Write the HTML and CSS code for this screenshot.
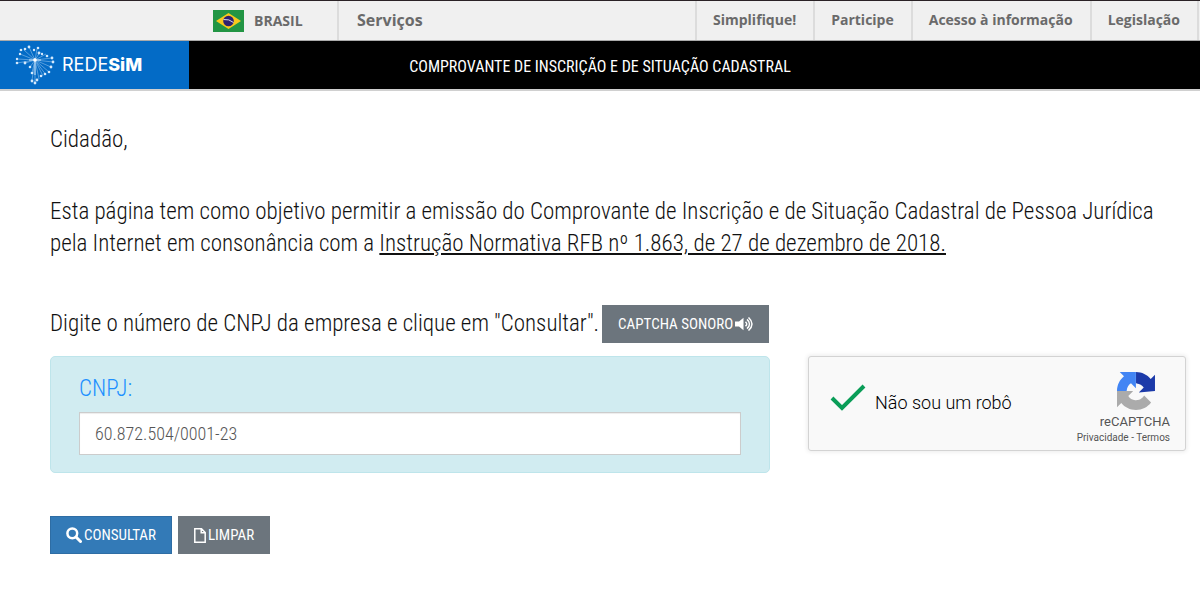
FILE: index.html
```html
<!DOCTYPE html>
<html lang="pt-BR">
<head>
<meta charset="utf-8">
<meta name="viewport" content="width=device-width, initial-scale=1">
<title>Comprovante de Inscrição e de Situação Cadastral</title>
<link rel="stylesheet" href="styles.css">
</head>
<body>
<nav class="gov-bar">
  <a class="gov-brand" href="#">
    <svg class="flag" viewBox="0 0 31 22" aria-hidden="true">
      <rect width="31" height="22" fill="#229544"/>
      <path d="M3 11 15.500 3 28 11 15.500 19Z" fill="#f8c81c"/>
      <circle cx="15.500" cy="11" r="5.300" fill="#302070"/>
      <path d="M10.500 9.500Q16 8.800 20.500 12.500" fill="none" stroke="#d8d8e8" stroke-width="1"/>
    </svg>
    <span>BRASIL</span>
  </a>
  <a class="gov-services" href="#">Serviços</a>
  <div class="gov-links">
    <a href="#">Simplifique!</a>
    <a href="#">Participe</a>
    <a href="#">Acesso à informação</a>
    <a href="#">Legislação</a>
  </div>
</nav>
<header class="site-header">
  <a class="logo" href="#">
    <svg class="logo-map" viewBox="0 0 40 40" aria-hidden="true">
      <g stroke="#8fc0ec" stroke-width="1" opacity=".6">
        <path d="M20 15 2 14M20 15 2 18M20 15 5 9M20 15 9 5M20 15 14 2M20 15 22 4M20 15 25 7M20 15 31 9M20 15 37 13M20 15 38 17M20 15 36 22M20 15 34 27M20 15 28 31M20 15 24 34M20 15 20 39M20 15 17 35M20 15 15 22M20 15 10 18M20 15 17 28M20 15 31 30"/>
      </g>
      <path d="M20 13V30M14 15H26" stroke="#cde5fa" stroke-width="1"/>
      <circle cx="20" cy="15" r="1.800" fill="#fff"/>
      <g fill="#d4e9fc">
        <circle cx="2" cy="14" r="1.200"/><circle cx="2" cy="18" r="1.300"/><circle cx="5" cy="9" r="1.200"/><circle cx="6" cy="5" r="1.300"/><circle cx="10" cy="4" r="1.300"/><circle cx="14" cy="2" r="1.400"/><circle cx="19" cy="5" r="1.200"/><circle cx="23" cy="3" r="1.300"/><circle cx="24" cy="8" r="1.400"/><circle cx="27" cy="9" r="1.200"/><circle cx="32" cy="11" r="1.300"/><circle cx="37" cy="13" r="1.400"/><circle cx="38" cy="17" r="1.400"/><circle cx="36" cy="22" r="1.400"/><circle cx="34" cy="27" r="1.300"/><circle cx="30" cy="29" r="1.300"/><circle cx="26" cy="31" r="1.300"/><circle cx="22" cy="35" r="1.400"/><circle cx="20" cy="38" r="1.400"/><circle cx="17" cy="36" r="1.400"/><circle cx="17" cy="28" r="1.300"/><circle cx="15" cy="22" r="1.300"/><circle cx="10" cy="18" r="1.400"/>
      </g>
    </svg>
    <span class="logo-text">REDE<b>SiM</b></span>
  </a>
  <h1>COMPROVANTE DE INSCRIÇÃO E DE SITUAÇÃO CADASTRAL</h1>
</header>
<main class="content">
  <p>Cidadão,</p>
  <p class="intro">Esta página tem como objetivo permitir a emissão do Comprovante de Inscrição e de Situação Cadastral de Pessoa Jurídica pela Internet em consonância com a <a href="#">Instrução Normativa RFB nº 1.863, de 27 de dezembro de 2018.</a></p>
  <form>
    <div class="prompt">
      <p>Digite o número de CNPJ da empresa e clique em "Consultar".</p>
      <button class="btn" type="button">CAPTCHA SONORO
        <svg class="icon-sound" viewBox="0 0 18 14" aria-hidden="true"><path d="M0 4.500H4L8.500 .7V13.300L4 9.500H0Z" fill="#fff"/><path d="M10.500 4.700Q13 7 10.500 9.300M12 2.400Q17 7 12 11.600M13.500 .5Q20.500 7 13.500 13.500" fill="none" stroke="#fff" stroke-width="1.500"/></svg>
      </button>
    </div>
    <div class="fields">
      <div class="panel">
        <label for="cnpj">CNPJ:</label>
        <input id="cnpj" type="text" value="60.872.504/0001-23">
      </div>
      <div class="captcha">
        <svg class="check" viewBox="0 0 36 28" aria-hidden="true"><path d="M2 14 12 24 34 2" fill="none" stroke="#0a9d58" stroke-width="4"/></svg>
        <span class="captcha-label">Não sou um robô</span>
        <div class="captcha-brand">
          <svg class="captcha-logo" viewBox="0 0 64 64" aria-hidden="true">
            <path d="M64 31.955l-.033-1.370V4.687l-7.160 7.160C50.948 4.674 42.033.093 32.050.093V19c.485 0 .860.057 1.135.163 4.976.393 9.288 3.140 11.828 7.124l-8.307 8.307L64 31.953" fill="#1c3aa9"/>
            <path d="M31.862.094l-1.370.033H4.594l7.160 7.160C4.580 13.147 0 22.060 0 32.046H16.260c0-.485.057-.860.163-1.135.393-4.976 3.140-9.288 7.124-11.828l8.307 8.307L31.860.095" fill="#4285f4"/>
            <path d="M.001 32.045l.033 1.370v25.898l7.160-7.160c5.860 7.173 14.774 11.754 24.760 11.754 10.400 0 19.622-4.960 25.458-12.640l-11.736-11.860a15.550 15.550 0 0 1-4.754 5.334c-2.050 1.600-4.952 2.906-8.968 2.906-.485 0-.860-.057-1.135-.163-4.976-.393-9.288-3.140-11.828-7.124l8.307-8.307c-10.522.040-22.400.066-27.295-.005" fill="#ababab"/>
          </svg>
          <span class="captcha-name">reCAPTCHA</span>
          <span class="captcha-links"><a href="#">Privacidade</a> - <a href="#">Termos</a></span>
        </div>
      </div>
    </div>
    <div class="actions">
      <button class="btn btn-primary" type="submit">
        <svg class="icon-search" viewBox="0 0 16 16" aria-hidden="true"><circle cx="6.300" cy="6.300" r="4.900" fill="none" stroke="#fff" stroke-width="2.500"/><path d="M10 10 14.500 14.500" stroke="#fff" stroke-width="3" stroke-linecap="round"/></svg>
        CONSULTAR</button>
      <button class="btn" type="reset">
        <svg class="icon-file" viewBox="0 0 12 15" aria-hidden="true"><path d="M.8 .8H7.500L11.200 4.500V14.200H.8ZM7.200 .8V4.800H11.200" fill="none" stroke="#fff" stroke-width="1.500"/></svg>
        LIMPAR</button>
    </div>
  </form>
</main>
</body>
</html>
```
FILE: styles.css
```css
* { box-sizing: border-box; }
body {
  margin: 0;
  background: #fff;
  color: #111;
  font-family: "Roboto Condensed", Roboto, sans-serif;
  font-size: 23px;
  font-weight: 300;
  line-height: 32px;
}
p, h1 { margin: 0; }
a { color: inherit; }
svg { flex: none; }

.gov-bar {
  display: flex;
  height: 41px;
  border-top: 1px solid #2a2226;
  border-bottom: 1px solid #aaa;
  background: #f0f0f0;
  color: #6a6a6a;
  font: bold 14px/38px "Open Sans", sans-serif;
}
.gov-bar a { text-decoration: none; }
.gov-brand {
  display: flex;
  align-items: center;
  gap: 10px;
  width: 339px;
  padding-left: 213px;
  border-right: 2px solid #dcdcdc;
}
.flag { width: 31px; height: 22px; }
.gov-services { padding-left: 18px; font-size: 16px; }
.gov-links {
  display: flex;
  margin-left: auto;
  padding-right: 1px;
}
.gov-links a { padding: 0 17px 0 16px; border-left: 2px solid #dcdcdc; }
.gov-links a:last-child { border-right: 2px solid #dcdcdc; }

.site-header {
  display: grid;
  grid-template-columns: 189px 1fr 189px;
  height: 50px;
  border-bottom: 2px solid #d0d0d0;
  background: #000;
  color: #fff;
}
.logo {
  display: flex;
  align-items: center;
  gap: 7px;
  padding-left: 15px;
  background: #036bc6;
  text-decoration: none;
}
.logo-map { width: 40px; height: 40px; }
.logo-text { font: 400 18px/24px Inter, sans-serif; }
.logo-text b { font-weight: 800; }
h1 {
  align-self: center;
  padding-top: 3px;
  font-size: 16px;
  font-weight: 400;
  line-height: 24px;
  text-align: center;
}

.content { padding: 33px 14px 32px 50px; }
.intro { margin-top: 40px; padding-right: 30px; }
.prompt {
  display: flex;
  align-items: center;
  gap: 3px;
  margin-top: 45px;
}
.btn {
  display: inline-flex;
  align-items: center;
  justify-content: center;
  gap: 2px;
  height: 38px;
  padding: 0 15px;
  border: 1px solid #6c757d;
  background: #6c757d;
  color: #fff;
  font-family: inherit;
  font-size: 15px;
  white-space: nowrap;
}
.btn-primary { border-color: #2e6da4; background: #337ab7; }
.icon-sound { width: 18px; height: 14px; }
.icon-search { width: 16px; height: 16px; }
.icon-file { width: 12px; height: 15px; }

.fields {
  display: grid;
  grid-template-columns: 720fr 378fr;
  gap: 38px;
  align-items: start;
  margin-top: 13px;
}
.panel {
  padding: 16px 28px 17px;
  border: 1px solid #bee5eb;
  border-radius: 5px;
  background: #d1ecf1;
}
.panel label {
  display: block;
  margin-bottom: 7px;
  color: #1e90ff;
}
.panel input {
  display: block;
  width: 100%;
  height: 43px;
  padding: 0 15px;
  border: 1px solid #ccc;
  background: #fff;
  box-shadow: inset 0 1px 1px rgba(0, 0, 0, .075);
  color: #555;
  font-family: inherit;
  font-size: 18px;
  font-weight: 300;
}
.captcha {
  display: flex;
  align-items: center;
  height: 95px;
  padding: 0 15px 0 21px;
  border: 1px solid #d3d3d3;
  border-radius: 3px;
  background: #f9f9f9;
  box-shadow: 0 0 4px 1px rgba(0, 0, 0, .08);
  color: #000;
  font-family: Roboto, sans-serif;
}
.check { width: 36px; height: 28px; margin-bottom: 12px; }
.captcha-label { margin: 0 0 2px 9px; font-size: 18px; }
.captcha-brand {
  display: flex;
  flex-direction: column;
  align-items: flex-end;
  margin-left: auto;
  padding-top: 10px;
  color: #555;
  font-weight: 400;
}
.captcha-logo { width: 38px; height: 38px; margin: 0 15px 4px 0; }
.captcha-name { font-size: 13px; line-height: 16px; }
.captcha-links { font-size: 10px; line-height: 16px; }
.captcha-links a { text-decoration: none; }
.actions { display: flex; gap: 6px; margin-top: 43px; }
```
